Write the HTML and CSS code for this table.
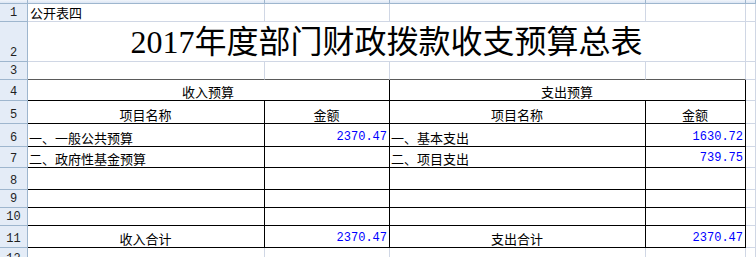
FILE: index.html
```html
<!DOCTYPE html>
<html lang="zh-CN">
<head>
  <meta charset="UTF-8">
  <title>2017年度部门财政拨款收支预算总表</title>
  <link rel="stylesheet" href="styles.css">
</head>
<body>
  <div class="sheet">
    <!-- column header strip -->
    <div class="corner"></div>
    <div class="colhead"></div>
    <div class="colhead"></div>
    <div class="colhead"></div>
    <div class="colhead"></div>
    <div class="colhead"></div>

    <!-- 1 -->
    <div class="rowhead">1</div>
    <div class="cell">公开表四</div>
    <div class="cell"></div>
    <div class="cell"></div>
    <div class="cell"></div>
    <div class="cell"></div>

    <!-- 2: title -->
    <div class="rowhead">2</div>
    <div class="cell title span4">2017年度部门财政拨款收支预算总表</div>
    <div class="cell"></div>

    <!-- 3 -->
    <div class="rowhead">3</div>
    <div class="cell rule"></div>
    <div class="cell rule"></div>
    <div class="cell rule"></div>
    <div class="cell rule"></div>
    <div class="cell"></div>

    <!-- 4 -->
    <div class="rowhead">4</div>
    <div class="cell t center span2">收入预算</div>
    <div class="cell t center span2">支出预算</div>
    <div class="cell"></div>

    <!-- 5 -->
    <div class="rowhead">5</div>
    <div class="cell t center">项目名称</div>
    <div class="cell t center">金额</div>
    <div class="cell t center">项目名称</div>
    <div class="cell t center">金额</div>
    <div class="cell"></div>

    <!-- 6 -->
    <div class="rowhead">6</div>
    <div class="cell t">一、一般公共预算</div>
    <div class="cell t num">2370.47</div>
    <div class="cell t">一、基本支出</div>
    <div class="cell t num">1630.72</div>
    <div class="cell"></div>

    <!-- 7 -->
    <div class="rowhead">7</div>
    <div class="cell t">二、政府性基金预算</div>
    <div class="cell t num"></div>
    <div class="cell t">二、项目支出</div>
    <div class="cell t num">739.75</div>
    <div class="cell"></div>

    <!-- 8 -->
    <div class="rowhead">8</div>
    <div class="cell t"></div>
    <div class="cell t"></div>
    <div class="cell t"></div>
    <div class="cell t"></div>
    <div class="cell"></div>

    <!-- 9 -->
    <div class="rowhead">9</div>
    <div class="cell t"></div>
    <div class="cell t"></div>
    <div class="cell t"></div>
    <div class="cell t"></div>
    <div class="cell"></div>

    <!-- 10 -->
    <div class="rowhead">10</div>
    <div class="cell t"></div>
    <div class="cell t"></div>
    <div class="cell t"></div>
    <div class="cell t"></div>
    <div class="cell"></div>

    <!-- 11: totals -->
    <div class="rowhead">11</div>
    <div class="cell t center">收入合计</div>
    <div class="cell t num">2370.47</div>
    <div class="cell t center">支出合计</div>
    <div class="cell t num">2370.47</div>
    <div class="cell"></div>

    <!-- 12 -->
    <div class="rowhead">12</div>
    <div class="cell"></div>
    <div class="cell"></div>
    <div class="cell"></div>
    <div class="cell"></div>
    <div class="cell"></div>
  </div>
</body>
</html>
```

FILE: styles.css
```css
html, body {
  margin: 0;
  padding: 0;
  background: #fff;
  overflow: hidden;
}

.sheet {
  display: grid;
  grid-template-columns: 28px 237px 125px 256px 100px 1fr;
  grid-template-rows: 4px 18px 40px 18px 21px 23px 23px 21px 22px 18px 18px 22px 20px;
  width: 756px;
  font-family: "Noto Sans CJK SC", sans-serif;
  font-size: 13px;
  color: #000;
}

.sheet > div {
  box-sizing: border-box;
  overflow: hidden;
  white-space: nowrap;
}

/* headers */
.corner,
.colhead {
  background: linear-gradient(#f1f5fb, #dce6f4);
  border-right: 1px solid #9eb6ce;
  border-bottom: 1px solid #9eb6ce;
}

.rowhead {
  display: flex;
  align-items: flex-end;
  justify-content: center;
  padding-bottom: 2px;
  background: #e4ecf7;
  border-right: 1px solid #9eb6ce;
  border-bottom: 1px solid #9eb6ce;
  font-family: "Liberation Mono", monospace;
  font-size: 12px;
  line-height: 12px;
  color: #1f1f1f;
}

/* cells */
.cell {
  display: flex;
  align-items: flex-end;
  padding: 0 2px 2px 2px;
  line-height: 13px;
  border-right: 1px solid #d0d7e5;
  border-bottom: 1px solid #d0d7e5;
}

.cell.t {
  border-right-color: #000;
  border-bottom-color: #000;
  padding-left: 1px;
}

.cell.rule {
  border-bottom-color: #5a5a5a;
}

.center {
  justify-content: center;
}

.num {
  justify-content: flex-end;
  font-family: "Liberation Mono", monospace;
  font-size: 12px;
  color: #0000ff;
}

.span2 {
  grid-column: span 2;
}

.span4 {
  grid-column: span 4;
}

.title {
  justify-content: center;
  padding-bottom: 3px;
  font-family: "Liberation Serif", "Noto Sans CJK SC", serif;
  font-size: 32px;
  line-height: 32px;
}
```
